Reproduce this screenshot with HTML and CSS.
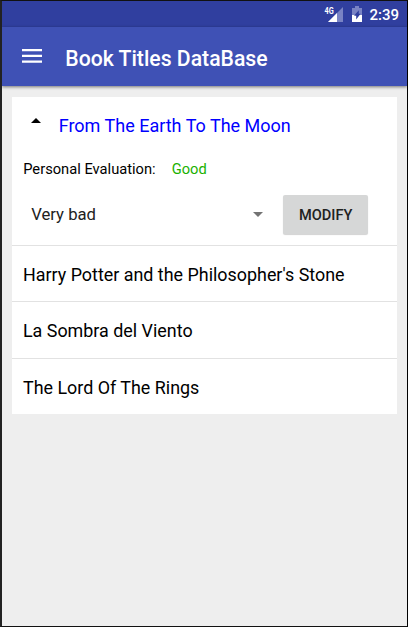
FILE: index.html
```html
<!DOCTYPE html>
<html lang="en">
<head>
<meta charset="utf-8">
<title>Book Titles DataBase</title>
<link rel="stylesheet" href="styles.css">
</head>
<body>
<div class="screen">
  <div class="status-bar">
    <svg class="signal" width="20" height="18" viewBox="0 0 20 18">
      <path d="M19 2v15H4z" fill="#7983c4"/>
      <path d="M13 8v9H4z" fill="#fff"/>
      <text class="network" x="0.5" y="8.8" textLength="9.2" lengthAdjust="spacingAndGlyphs">4G</text>
    </svg>
    <svg class="battery" width="10" height="16" viewBox="0 0 10 16">
      <path d="M3 0h4v2h3v8H0V2h3z" fill="#7983c4"/>
      <path d="M0 9h10v7H0z" fill="#fff"/>
      <path d="M6.8 4.2v3.6h1.8L4.2 13.5V9.7H2z" fill="#303f9f"/>
    </svg>
    <span class="clock">2:39</span>
  </div>
  <header class="app-bar">
    <svg class="menu" width="20" height="14" viewBox="0 0 20 14">
      <path d="M0 0h20v2.2H0zM0 5.8h20V8H0zM0 11.6h20v2.2H0z" fill="#fff"/>
    </svg>
    <h1 class="title">Book Titles DataBase</h1>
  </header>
  <main class="list">
    <section class="book expanded">
      <div class="heading">
        <svg class="caret" width="10" height="5" viewBox="0 0 10 5"><path d="M0 5l5-5 5 5z" fill="#000"/></svg>
        <span class="book-name active">From The Earth To The Moon</span>
      </div>
      <div class="evaluation">
        <span class="label">Personal Evaluation:</span>
        <span class="value">Good</span>
      </div>
      <div class="controls">
        <div class="spinner">
          <span>Very bad</span>
          <svg width="10" height="5" viewBox="0 0 10 5"><path d="M0 0h10L5 5z" fill="#737373"/></svg>
        </div>
        <button class="modify">MODIFY</button>
      </div>
    </section>
    <section class="book row first"><span class="book-name">Harry Potter and the Philosopher's Stone</span></section>
    <section class="book row"><span class="book-name">La Sombra del Viento</span></section>
    <section class="book row last"><span class="book-name">The Lord Of The Rings</span></section>
  </main>
</div>
</body>
</html>
```
FILE: styles.css
```css
* { box-sizing: border-box; }
body {
  margin: 0;
  font-family: Roboto, sans-serif;
  background: #eee;
}
svg { display: block; flex: none; }
.screen {
  width: 408px;
  height: 627px;
  overflow: hidden;
  background: #eee;
  border: 1px solid #111;
  border-left: 2px solid #222;
  border-right-color: #000;
}
.status-bar {
  display: flex;
  align-items: flex-start;
  height: 26px;
  padding-left: 322px;
  background: #303f9f;
  color: #fff;
}
.signal { margin-top: 4px; margin-right: 6px; }
.network { font: 700 9px Roboto, sans-serif; fill: #fff; }
.battery { margin-top: 5px; margin-right: 7.5px; margin-left: 2px; }
.clock { font-size: 15px; font-weight: 500; line-height: 18px; margin-top: 5px; }
.app-bar {
  display: flex;
  align-items: center;
  height: 59px;
  padding: 2px 0 0 19.5px;
  background: #3f51b5;
  box-shadow: 0 1px 3px rgba(0, 0, 0, .5);
}
.menu { margin-right: 23.8px; margin-top: -2.5px; }
.title {
  margin: 3px 0 0;
  color: #fff;
  font-size: 21.2px;
  font-weight: 500;
  line-height: 28px;
}
.list { width: 384.5px; margin: 11px 0 0 10.4px; background: #fff; }
.book { border-bottom: 1px solid #e2e2e2; }
.book-name { font-size: 17.9px; line-height: 24px; white-space: nowrap; color: #000; }
.expanded { height: 149px; }
.heading { display: flex; height: 58px; padding: 17px 0 0 18.3px; }
.caret { margin: 4px 18px 0 0; }
.active { color: #00f; font-size: 18px; }
.evaluation {
  display: flex;
  height: 32px;
  padding-left: 10.8px;
  font-size: 14.7px;
  line-height: 28px;
}
.label { margin-right: 16px; }
.value { color: #1bb100; }
.controls { display: flex; padding: 8px 0 0 18.8px; }
.spinner {
  display: flex;
  align-items: center;
  justify-content: space-between;
  width: 232px;
  height: 39px;
  margin-right: 20px;
  color: #212121;
  font-size: 16.7px;
}
.modify {
  width: 85px;
  height: 39px;
  padding: 0;
  border: 0;
  border-radius: 2px;
  background: #d6d7d7;
  box-shadow: 0 1px 1px rgba(0, 0, 0, .18);
  color: #212121;
  font: 500 14.6px Roboto, sans-serif;
}
.row {
  display: flex;
  align-items: center;
  height: 57px;
  padding: 1px 0 0 10.6px;
}
.first { height: 56px; padding-top: 2px; }
.last { height: 55px; padding-top: 2px; border-bottom: 0; }
```
